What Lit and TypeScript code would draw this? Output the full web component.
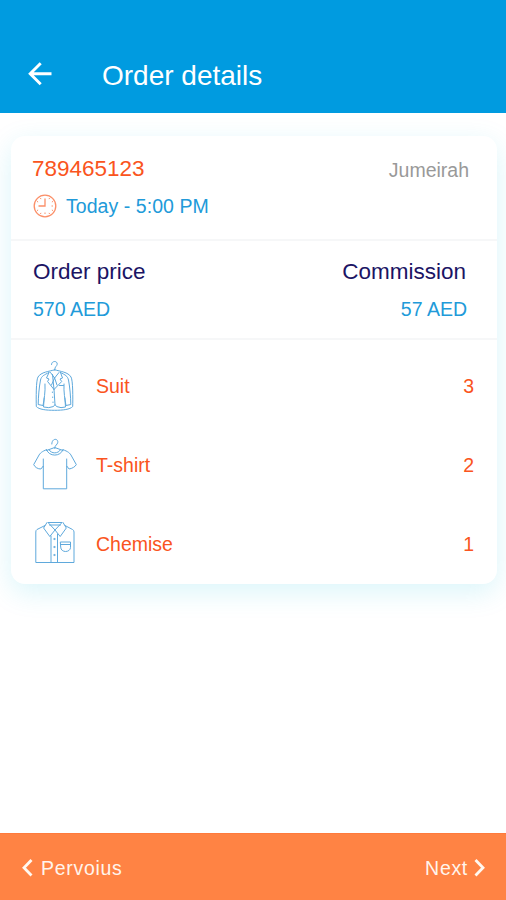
import { LitElement, html, svg, css, SVGTemplateResult } from "lit";
import { customElement } from "lit/decorators.js";

interface OrderItem {
  name: string;
  count: number;
  icon: SVGTemplateResult;
}

const suit = svg`
  <path d="M19.500 6.500C19.500 2.400 25.600 2.600 25.200 6.200C25 8.300 22.700 8.300 22.700 11.800"/>
  <path d="M22.700 11.800C17 13.500 9 14 6 19C4 22 4.100 41 4.300 48.500C7 51.500 14 52.300 22.500 52.300S38 51.500 40.700 48.500C40.900 41 41 22 39 19C36 14 28.500 13.500 22.700 11.800Z"/>
  <path d="M17 14.500C12 17 9.500 18 8.500 22C7 30 6.400 38 6.200 46.500L11 47.500C12 42 13.500 34 13 26"/>
  <path d="M28.500 14.500C33.500 17 35.500 18 36.500 22C38 30 38.600 38 38.800 46.500L34 47.500C33 42 31.500 34 32 26"/>
  <path d="M12.200 40L11.500 49Q17 50.500 21.500 48.500L23 46.500L24.500 48.500Q29 50.500 33.500 49L32.900 40"/>
  <path d="M17 14.500L14.500 20L17 21L15.600 23.500L22 31.500L29.700 23.500L28 21L30.500 20L28.500 14.500"/>
  <path d="M18.500 14.500L22.600 20L27 14.500M22.600 20L19.500 27M22.600 20L25 27M20.500 16.500L22 31.500M27.500 27.500H31.500M22 31.500L23 46.500"/>
  <path d="M20.400 34V34.500M20.700 39V39.500M21 44V44.500"/>`;

const tshirt = svg`
  <path d="M19.800 7C19.800 .9 26.200 1.200 25.800 5.300C25.500 8 22.700 7.800 22.700 11.500"/>
  <path d="M14.500 13.500L22.700 10.500L31 13.500"/>
  <path d="M14.500 12.700C10 14.500 8 16 6.500 19L1.700 27.600C3 30.500 6 32 8.900 32L11.300 29V51.800H34.700V29L37.100 32C40 31.500 43 30 44.300 27.600L39.500 19C38 16 36 14.500 31 12.700M11.300 22V29M34.700 22V29"/>
  <path d="M14.500 12.700C17 20 28.500 20 31 12.700M17 12.800C19.500 17 26 17 28.500 12.800"/>`;

const chemise = svg`
  <path d="M13 9.500L5 13.500Q3.800 14.200 3.800 16V46.500H42V16Q42 14.200 40.500 13.500L33 9.500"/>
  <path d="M15 6.500L11.600 12L17.800 20.500L23 14L16 6.500H30L23 14L28.200 20.500L34.300 12L31 6.500"/>
  <path d="M17.500 9H28.500M19 20V46.500M25.500 18V46.500"/>
  <path d="M28.700 26H38.500V31.500C38.500 34 36 35.500 33.600 35.500S28.700 34 28.700 31.500ZM28.700 28.500H38.500"/>
  <circle cx="22.300" cy="23" r=".6"/><circle cx="22.300" cy="31" r=".6"/><circle cx="22.300" cy="39" r=".6"/>`;

@customElement("app-root")
export class AppRoot extends LitElement {
  static styles = css`
    :host {
      display: flex;
      flex-direction: column;
      height: 100vh;
      box-sizing: border-box;
      background: #fff;
      font: 19.5px/24px "Liberation Sans", Arial, sans-serif;
      color: #219ad9;
    }
    svg {
      display: block;
      flex: none;
      fill: none;
    }
    header {
      display: flex;
      align-items: center;
      box-sizing: border-box;
      height: 113px;
      padding: 37px 28px 0;
      background: #009be0;
      color: #fff;
    }
    h1 {
      margin: 2px 0 0 49px;
      font-size: 28px;
      line-height: 34px;
      font-weight: 400;
    }
    main {
      flex: 1;
      padding: 23px 9px 0 11px;
    }
    .card {
      border-radius: 14px;
      background: #fff;
      box-shadow: 0 8px 28px rgba(0, 185, 220, 0.15);
      height: 448px;
    }
    .section {
      display: flex;
      justify-content: space-between;
      box-sizing: border-box;
      border-bottom: 2px solid #f6f7f8;
    }
    .summary {
      height: 105px;
      padding: 19px 28px 0 21px;
    }
    .prices {
      height: 99px;
      padding: 17px 30px 0 22px;
    }
    .end {
      text-align: right;
    }
    .end .big {
      margin-right: 1px;
    }
    .big {
      font-size: 22.5px;
      line-height: 28px;
    }
    .orange {
      color: #fa5420;
    }
    .navy {
      color: #1b1464;
    }
    .place {
      color: #999;
      padding-top: 3px;
    }
    .when {
      display: flex;
      align-items: center;
      gap: 9px;
      margin-top: 11px;
      padding-left: 1px;
      letter-spacing: 0.05px;
    }
    .amount {
      margin-top: 11px;
    }
    .items {
      padding: 6px 23px 0 21px;
    }
    .item {
      display: flex;
      align-items: center;
      height: 79px;
      color: #fa5420;
    }
    .item svg {
      stroke: #5fa9dc;
      stroke-width: 1;
      stroke-linejoin: round;
      stroke-linecap: round;
    }
    .name {
      flex: 1;
      margin-left: 16px;
    }
    footer {
      display: flex;
      justify-content: space-between;
      align-items: center;
      box-sizing: border-box;
      height: 67px;
      padding: 1px 20px 0 21px;
      border-top: 1px solid #ff7a3c;
      background: #ff8344;
      color: #fff4ec;
      letter-spacing: 0.7px;
    }
    .nav {
      display: flex;
      align-items: center;
      gap: 6px;
    }
    .nav:first-child {
      gap: 7px;
    }
    .nav:last-child {
      gap: 5px;
    }
  `;

  private items: OrderItem[] = [
    { name: "Suit", count: 3, icon: suit },
    { name: "T-shirt", count: 2, icon: tshirt },
    { name: "Chemise", count: 1, icon: chemise },
  ];

  render() {
    return html`
      <header>
        <svg width="25" height="28" viewBox="0 0 25 28" stroke="#fff" stroke-width="2.900">
          <path d="M12.700 2.300L2.200 12.700L12.700 23.200M2.200 12.700H23.500" />
        </svg>
        <h1>Order details</h1>
      </header>
      <main>
        <div class="card">
          <div class="section summary">
            <div>
              <div class="big orange">789465123</div>
              <div class="when">
                <svg width="24" height="24" viewBox="0 0 24 24" stroke="#fb8f68" stroke-width="1.300">
                  <circle cx="12" cy="12" r="10.800" />
                  <path d="M12 4.500V12H5.500" />
                  <path d="M12 18.500V20M18.500 12H20M16 5.100L16.600 4M18.900 8L20 7.400M18.900 16L20 16.600M16 18.900L16.600 20M8 18.900L7.400 20M5.100 16L4 16.600M8 5.100L7.400 4M5.100 8L4 7.400" stroke-width="1" />
                </svg>
                <span>Today - 5:00 PM</span>
              </div>
            </div>
            <div class="place">Jumeirah</div>
          </div>
          <div class="section prices">
            <div>
              <div class="big navy">Order price</div>
              <div class="amount">570 AED</div>
            </div>
            <div class="end">
              <div class="big navy">Commission</div>
              <div class="amount">57 AED</div>
            </div>
          </div>
          <div class="items">
            ${this.items.map(
              (i) => html`<div class="item">
                <svg width="48" height="56" viewBox="0 0 48 56">${i.icon}</svg>
                <span class="name">${i.name}</span>
                <span>${i.count}</span>
              </div>`
            )}
          </div>
        </div>
      </main>
      <footer>
        <div class="nav">
          <svg width="13" height="20" viewBox="0 0 13 20" stroke="#fff8f0" stroke-width="2.800">
            <path d="M10.500 2L3 9.800L10.500 17.500" />
          </svg>
          <span>Pervoius</span>
        </div>
        <div class="nav">
          <span>Next</span>
          <svg width="13" height="20" viewBox="0 0 13 20" stroke="#fff8f0" stroke-width="2.800">
            <path d="M2.500 2L10 9.800L2.500 17.500" />
          </svg>
        </div>
      </footer>
    `;
  }
}
